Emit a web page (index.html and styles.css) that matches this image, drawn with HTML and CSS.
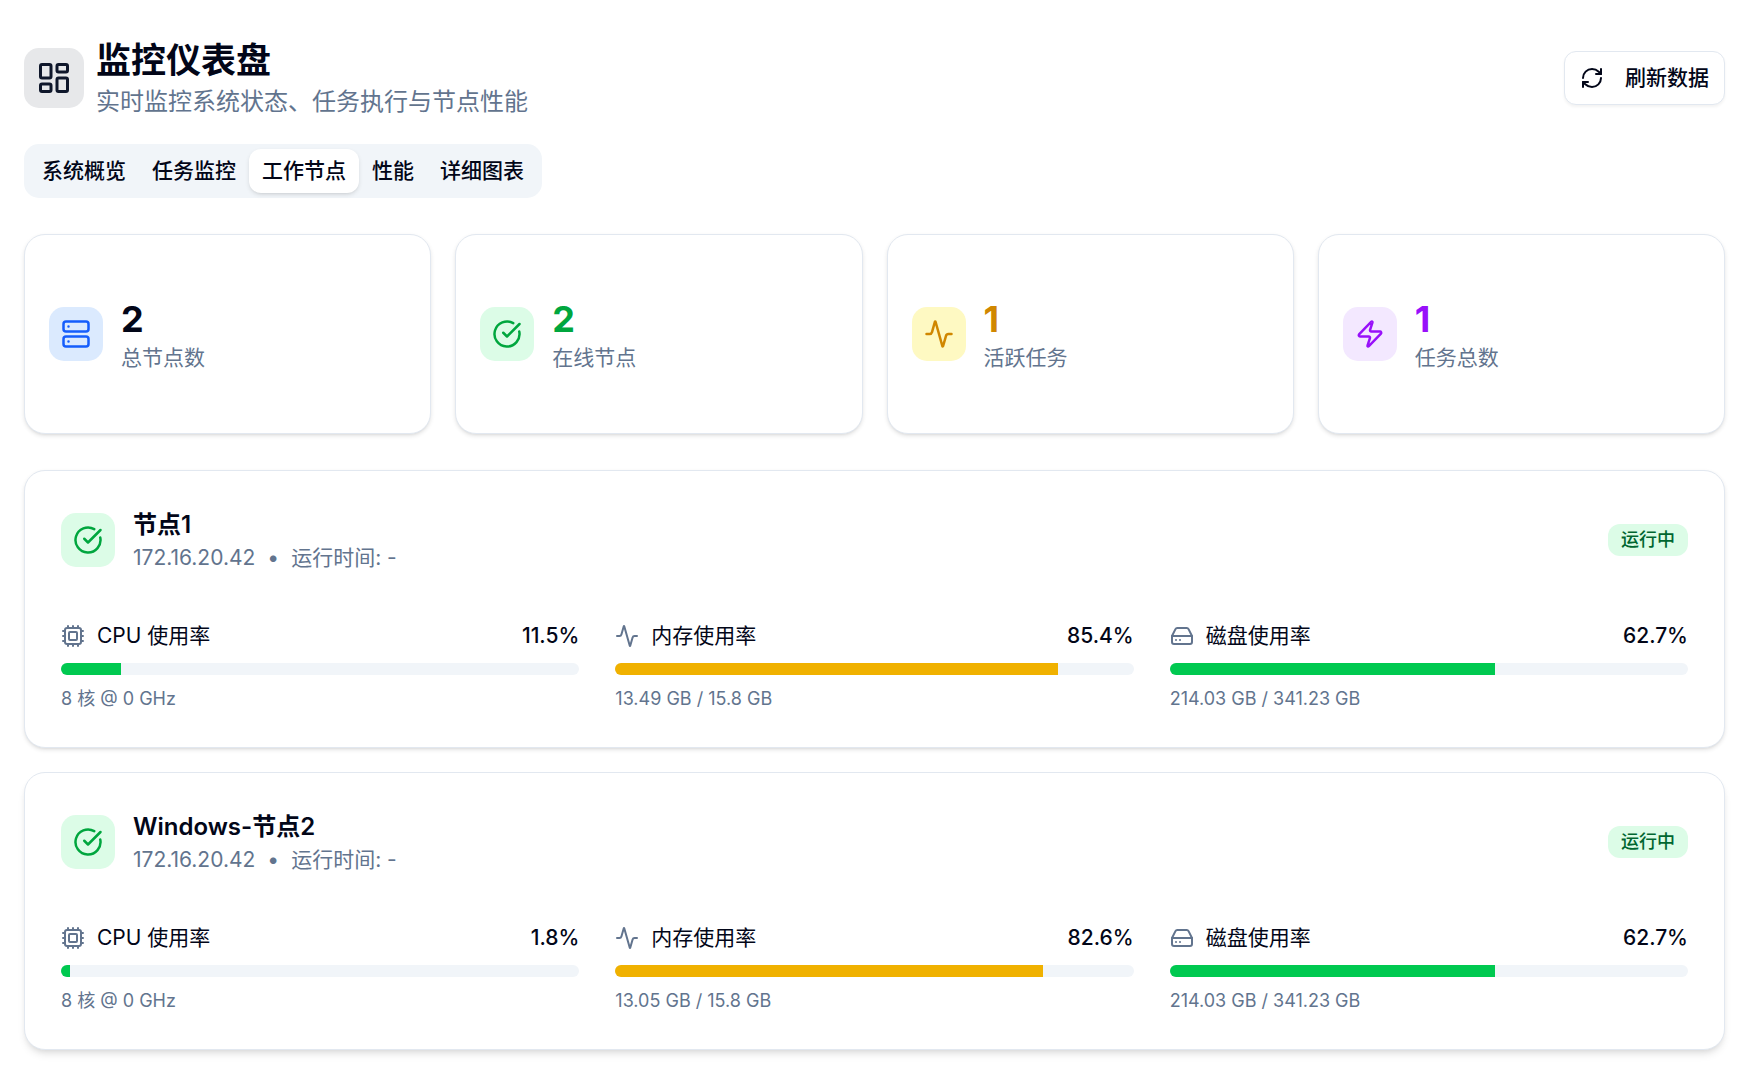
FILE: index.html
```html
<!DOCTYPE html>
<html lang="zh-CN">
<head>
<meta charset="utf-8">
<meta name="viewport" content="width=device-width, initial-scale=1">
<title>监控仪表盘</title>
<link rel="stylesheet" href="styles.css">
</head>
<body>
<svg class="sprite" aria-hidden="true">
  <symbol id="dashboard" viewBox="0 0 24 24"><rect x="3" y="3" width="7" height="9" rx="1"/><rect x="14" y="3" width="7" height="5" rx="1"/><rect x="14" y="12" width="7" height="9" rx="1"/><rect x="3" y="16" width="7" height="5" rx="1"/></symbol>
  <symbol id="refresh" viewBox="0 0 24 24"><path d="M3 12a9 9 0 0 1 9-9 9.75 9.75 0 0 1 6.74 2.74L21 8"/><path d="M21 3v5h-5"/><path d="M21 12a9 9 0 0 1-9 9 9.75 9.75 0 0 1-6.74-2.74L3 16"/><path d="M8 16H3v5"/></symbol>
  <symbol id="server" viewBox="0 0 24 24"><rect x="2" y="2" width="20" height="8" rx="2"/><rect x="2" y="14" width="20" height="8" rx="2"/><path d="M6 6h.01M6 18h.01"/></symbol>
  <symbol id="check" viewBox="0 0 24 24"><path d="M21.801 10A10 10 0 1 1 17 3.335"/><path d="m9 11 3 3L22 4"/></symbol>
  <symbol id="activity" viewBox="0 0 24 24"><path d="M22 12h-2.48a2 2 0 0 0-1.93 1.46l-2.35 8.36a.25.25 0 0 1-.48 0L9.24 2.18a.25.25 0 0 0-.48 0l-2.35 8.36A2 2 0 0 1 4.49 12H2"/></symbol>
  <symbol id="zap" viewBox="0 0 24 24"><path d="M4 14a1 1 0 0 1-.78-1.63l9.9-10.2a.5.5 0 0 1 .86.46l-1.92 6.02A1 1 0 0 0 13 10h7a1 1 0 0 1 .78 1.63l-9.9 10.2a.5.5 0 0 1-.86-.46l1.92-6.02A1 1 0 0 0 11 14z"/></symbol>
  <symbol id="cpu" viewBox="0 0 24 24"><path d="M12 20v2M12 2v2M17 20v2M17 2v2M2 12h2M2 17h2M2 7h2M20 12h2M20 17h2M20 7h2M7 20v2M7 2v2"/><rect x="4" y="4" width="16" height="16" rx="2"/><rect x="8" y="8" width="8" height="8" rx="1"/></symbol>
  <symbol id="disk" viewBox="0 0 24 24"><path d="M22 12H2"/><path d="M5.45 5.11 2 12v6a2 2 0 0 0 2 2h16a2 2 0 0 0 2-2v-6l-3.45-6.89A2 2 0 0 0 16.76 4H7.24a2 2 0 0 0-1.79 1.11z"/><path d="M6 16h.01M10 16h.01"/></symbol>
</svg>
<main class="page">
  <header class="header">
    <div class="brand">
      <span class="brand-icon"><svg class="icon icon-lg"><use href="#dashboard"/></svg></span>
      <div>
        <h1 class="title">监控仪表盘</h1>
        <p class="subtitle">实时监控系统状态、任务执行与节点性能</p>
      </div>
    </div>
    <button class="refresh" type="button"><svg class="icon"><use href="#refresh"/></svg>刷新数据</button>
  </header>

  <div class="tabs" role="tablist">
    <button class="tab" type="button" role="tab">系统概览</button>
    <button class="tab" type="button" role="tab">任务监控</button>
    <button class="tab tab-active" type="button" role="tab" aria-selected="true">工作节点</button>
    <button class="tab" type="button" role="tab">性能</button>
    <button class="tab" type="button" role="tab">详细图表</button>
  </div>

  <section class="stats">
    <article class="card stat">
      <span class="badge-icon blue"><svg class="icon icon-md"><use href="#server"/></svg></span>
      <div><p class="stat-value">2</p><p class="stat-label">总节点数</p></div>
    </article>
    <article class="card stat">
      <span class="badge-icon green"><svg class="icon icon-md"><use href="#check"/></svg></span>
      <div><p class="stat-value text-green">2</p><p class="stat-label">在线节点</p></div>
    </article>
    <article class="card stat">
      <span class="badge-icon yellow"><svg class="icon icon-md"><use href="#activity"/></svg></span>
      <div><p class="stat-value text-yellow">1</p><p class="stat-label">活跃任务</p></div>
    </article>
    <article class="card stat">
      <span class="badge-icon purple"><svg class="icon icon-md"><use href="#zap"/></svg></span>
      <div><p class="stat-value text-purple">1</p><p class="stat-label">任务总数</p></div>
    </article>
  </section>

  <section class="nodes">
    <article class="card node">
      <div class="node-head">
        <span class="badge-icon green"><svg class="icon icon-md"><use href="#check"/></svg></span>
        <div class="node-info">
          <h2 class="node-name">节点1</h2>
          <p class="node-meta"><span>172.16.20.42</span><span>•</span><span>运行时间: -</span></p>
        </div>
        <span class="status">运行中</span>
      </div>
      <div class="metrics">
        <div class="metric">
          <div class="metric-head"><svg class="icon"><use href="#cpu"/></svg><span>CPU 使用率</span><span class="metric-value">11.5%</span></div>
          <div class="track"><div class="fill" style="width: 11.5%"></div></div>
          <p class="metric-note">8 核 @ 0 GHz</p>
        </div>
        <div class="metric">
          <div class="metric-head"><svg class="icon"><use href="#activity"/></svg><span>内存使用率</span><span class="metric-value">85.4%</span></div>
          <div class="track"><div class="fill fill-warn" style="width: 85.4%"></div></div>
          <p class="metric-note">13.49 GB / 15.8 GB</p>
        </div>
        <div class="metric">
          <div class="metric-head"><svg class="icon"><use href="#disk"/></svg><span>磁盘使用率</span><span class="metric-value">62.7%</span></div>
          <div class="track"><div class="fill" style="width: 62.7%"></div></div>
          <p class="metric-note">214.03 GB / 341.23 GB</p>
        </div>
      </div>
    </article>

    <article class="card node node-raised">
      <div class="node-head">
        <span class="badge-icon green"><svg class="icon icon-md"><use href="#check"/></svg></span>
        <div class="node-info">
          <h2 class="node-name">Windows-节点2</h2>
          <p class="node-meta"><span>172.16.20.42</span><span>•</span><span>运行时间: -</span></p>
        </div>
        <span class="status">运行中</span>
      </div>
      <div class="metrics">
        <div class="metric">
          <div class="metric-head"><svg class="icon"><use href="#cpu"/></svg><span>CPU 使用率</span><span class="metric-value">1.8%</span></div>
          <div class="track"><div class="fill" style="width: 1.8%"></div></div>
          <p class="metric-note">8 核 @ 0 GHz</p>
        </div>
        <div class="metric">
          <div class="metric-head"><svg class="icon"><use href="#activity"/></svg><span>内存使用率</span><span class="metric-value">82.6%</span></div>
          <div class="track"><div class="fill fill-warn" style="width: 82.6%"></div></div>
          <p class="metric-note">13.05 GB / 15.8 GB</p>
        </div>
        <div class="metric">
          <div class="metric-head"><svg class="icon"><use href="#disk"/></svg><span>磁盘使用率</span><span class="metric-value">62.7%</span></div>
          <div class="track"><div class="fill" style="width: 62.7%"></div></div>
          <p class="metric-note">214.03 GB / 341.23 GB</p>
        </div>
      </div>
    </article>
  </section>
</main>
</body>
</html>
```
FILE: styles.css
```css
:root {
  --ink: #020618;
  --muted: #62748e;
  --line: #e2e8f0;
  --soft: #f1f5f9;
}

* { box-sizing: border-box; }

body {
  margin: 0;
  background: #fff;
  color: var(--ink);
  font-family: Inter, "Noto Sans CJK SC", sans-serif;
  font-size: 21px;
  line-height: 30px;
}

h1, h2, p { margin: 0; }

button {
  font: inherit;
  font-weight: 500;
  color: inherit;
  cursor: pointer;
}

.sprite { display: none; }

.icon {
  width: 24px;
  height: 24px;
  flex: none;
  fill: none;
  stroke: currentColor;
  stroke-width: 2;
  stroke-linecap: round;
  stroke-linejoin: round;
}
.icon-md { width: 30px; height: 30px; }
.icon-lg { width: 36px; height: 36px; }

.page {
  padding: 36px 24px 24px;
  display: flex;
  flex-direction: column;
}

/* Header */
.header {
  display: flex;
  align-items: center;
  justify-content: space-between;
  margin-bottom: 24px;
}
.brand {
  display: flex;
  align-items: center;
  gap: 12px;
}
.brand-icon {
  display: flex;
  padding: 12px;
  border-radius: 15px;
  background: #e7e8ea;
  color: #0f172b;
}
.title {
  font-size: 35px;
  line-height: 48px;
  font-weight: 700;
}
.subtitle {
  font-size: 24px;
  line-height: 36px;
  color: var(--muted);
}
.refresh {
  display: flex;
  align-items: center;
  gap: 21px;
  padding: 11px 15px;
  border: 1px solid var(--line);
  border-radius: 12px;
  background: #fff;
  box-shadow: 0 2px 3px rgba(0, 0, 0, .05);
}

/* Tabs */
.tabs {
  display: flex;
  align-self: flex-start;
  padding: 5px;
  margin-bottom: 36px;
  border-radius: 15px;
  background: var(--soft);
}
.tab {
  padding: 7px 13px;
  border: 0;
  border-radius: 12px;
  background: none;
}
.tab-active {
  background: #fff;
  box-shadow: 0 2px 4px rgba(0, 0, 0, .1), 0 2px 3px -2px rgba(0, 0, 0, .1);
}

/* Cards */
.card {
  border: 1px solid var(--line);
  border-radius: 21px;
  background: #fff;
  box-shadow: 0 2px 4px rgba(0, 0, 0, .1), 0 2px 3px -2px rgba(0, 0, 0, .1);
}
.badge-icon {
  display: flex;
  padding: 12px;
  border-radius: 15px;
}
.blue { background: #dbeafe; color: #155dfc; }
.green { background: #dcfce7; color: #00a63e; }
.yellow { background: #fef9c2; color: #d08700; }
.purple { background: #f3e8ff; color: #9810fa; }
.text-green { color: #00a63e; }
.text-yellow { color: #d08700; }
.text-purple { color: #9810fa; }

.stats {
  display: grid;
  grid-template-columns: repeat(4, 1fr);
  gap: 24px;
  margin-bottom: 36px;
}
.stat {
  display: flex;
  align-items: center;
  gap: 18px;
  padding: 60px 24px;
}
.stat-value {
  font-size: 36px;
  line-height: 48px;
  font-weight: 700;
}
.stat-label { color: var(--muted); }

/* Worker nodes */
.nodes {
  display: flex;
  flex-direction: column;
  gap: 24px;
}
.node { padding: 36px; }
.node-raised {
  box-shadow: 0 6px 9px -2px rgba(0, 0, 0, .1), 0 3px 6px -3px rgba(0, 0, 0, .1);
}
.node-head {
  display: flex;
  align-items: center;
  gap: 18px;
  margin-bottom: 48px;
}
.node-info { flex: 1; }
.node-name {
  font-size: 24px;
  line-height: 36px;
  font-weight: 600;
}
.node-meta {
  display: flex;
  gap: 12px;
  color: var(--muted);
}
.status {
  padding: 4px 13px;
  border-radius: 12px;
  background: #dcfce7;
  color: #016630;
  font-size: 18px;
  line-height: 24px;
  font-weight: 500;
}
.metrics {
  display: grid;
  grid-template-columns: repeat(3, 1fr);
  gap: 36px;
}
.metric {
  display: flex;
  flex-direction: column;
  gap: 12px;
}
.metric-head {
  display: flex;
  align-items: center;
  gap: 12px;
}
.metric-head .icon { color: var(--muted); }
.metric-value {
  margin-left: auto;
  font-weight: 500;
}
.track {
  height: 12px;
  border-radius: 6px;
  background: var(--soft);
  overflow: hidden;
}
.fill {
  height: 100%;
  background: #00c950;
}
.fill-warn { background: #f0b100; }
.metric-note {
  font-size: 18px;
  line-height: 24px;
  color: var(--muted);
}
```
